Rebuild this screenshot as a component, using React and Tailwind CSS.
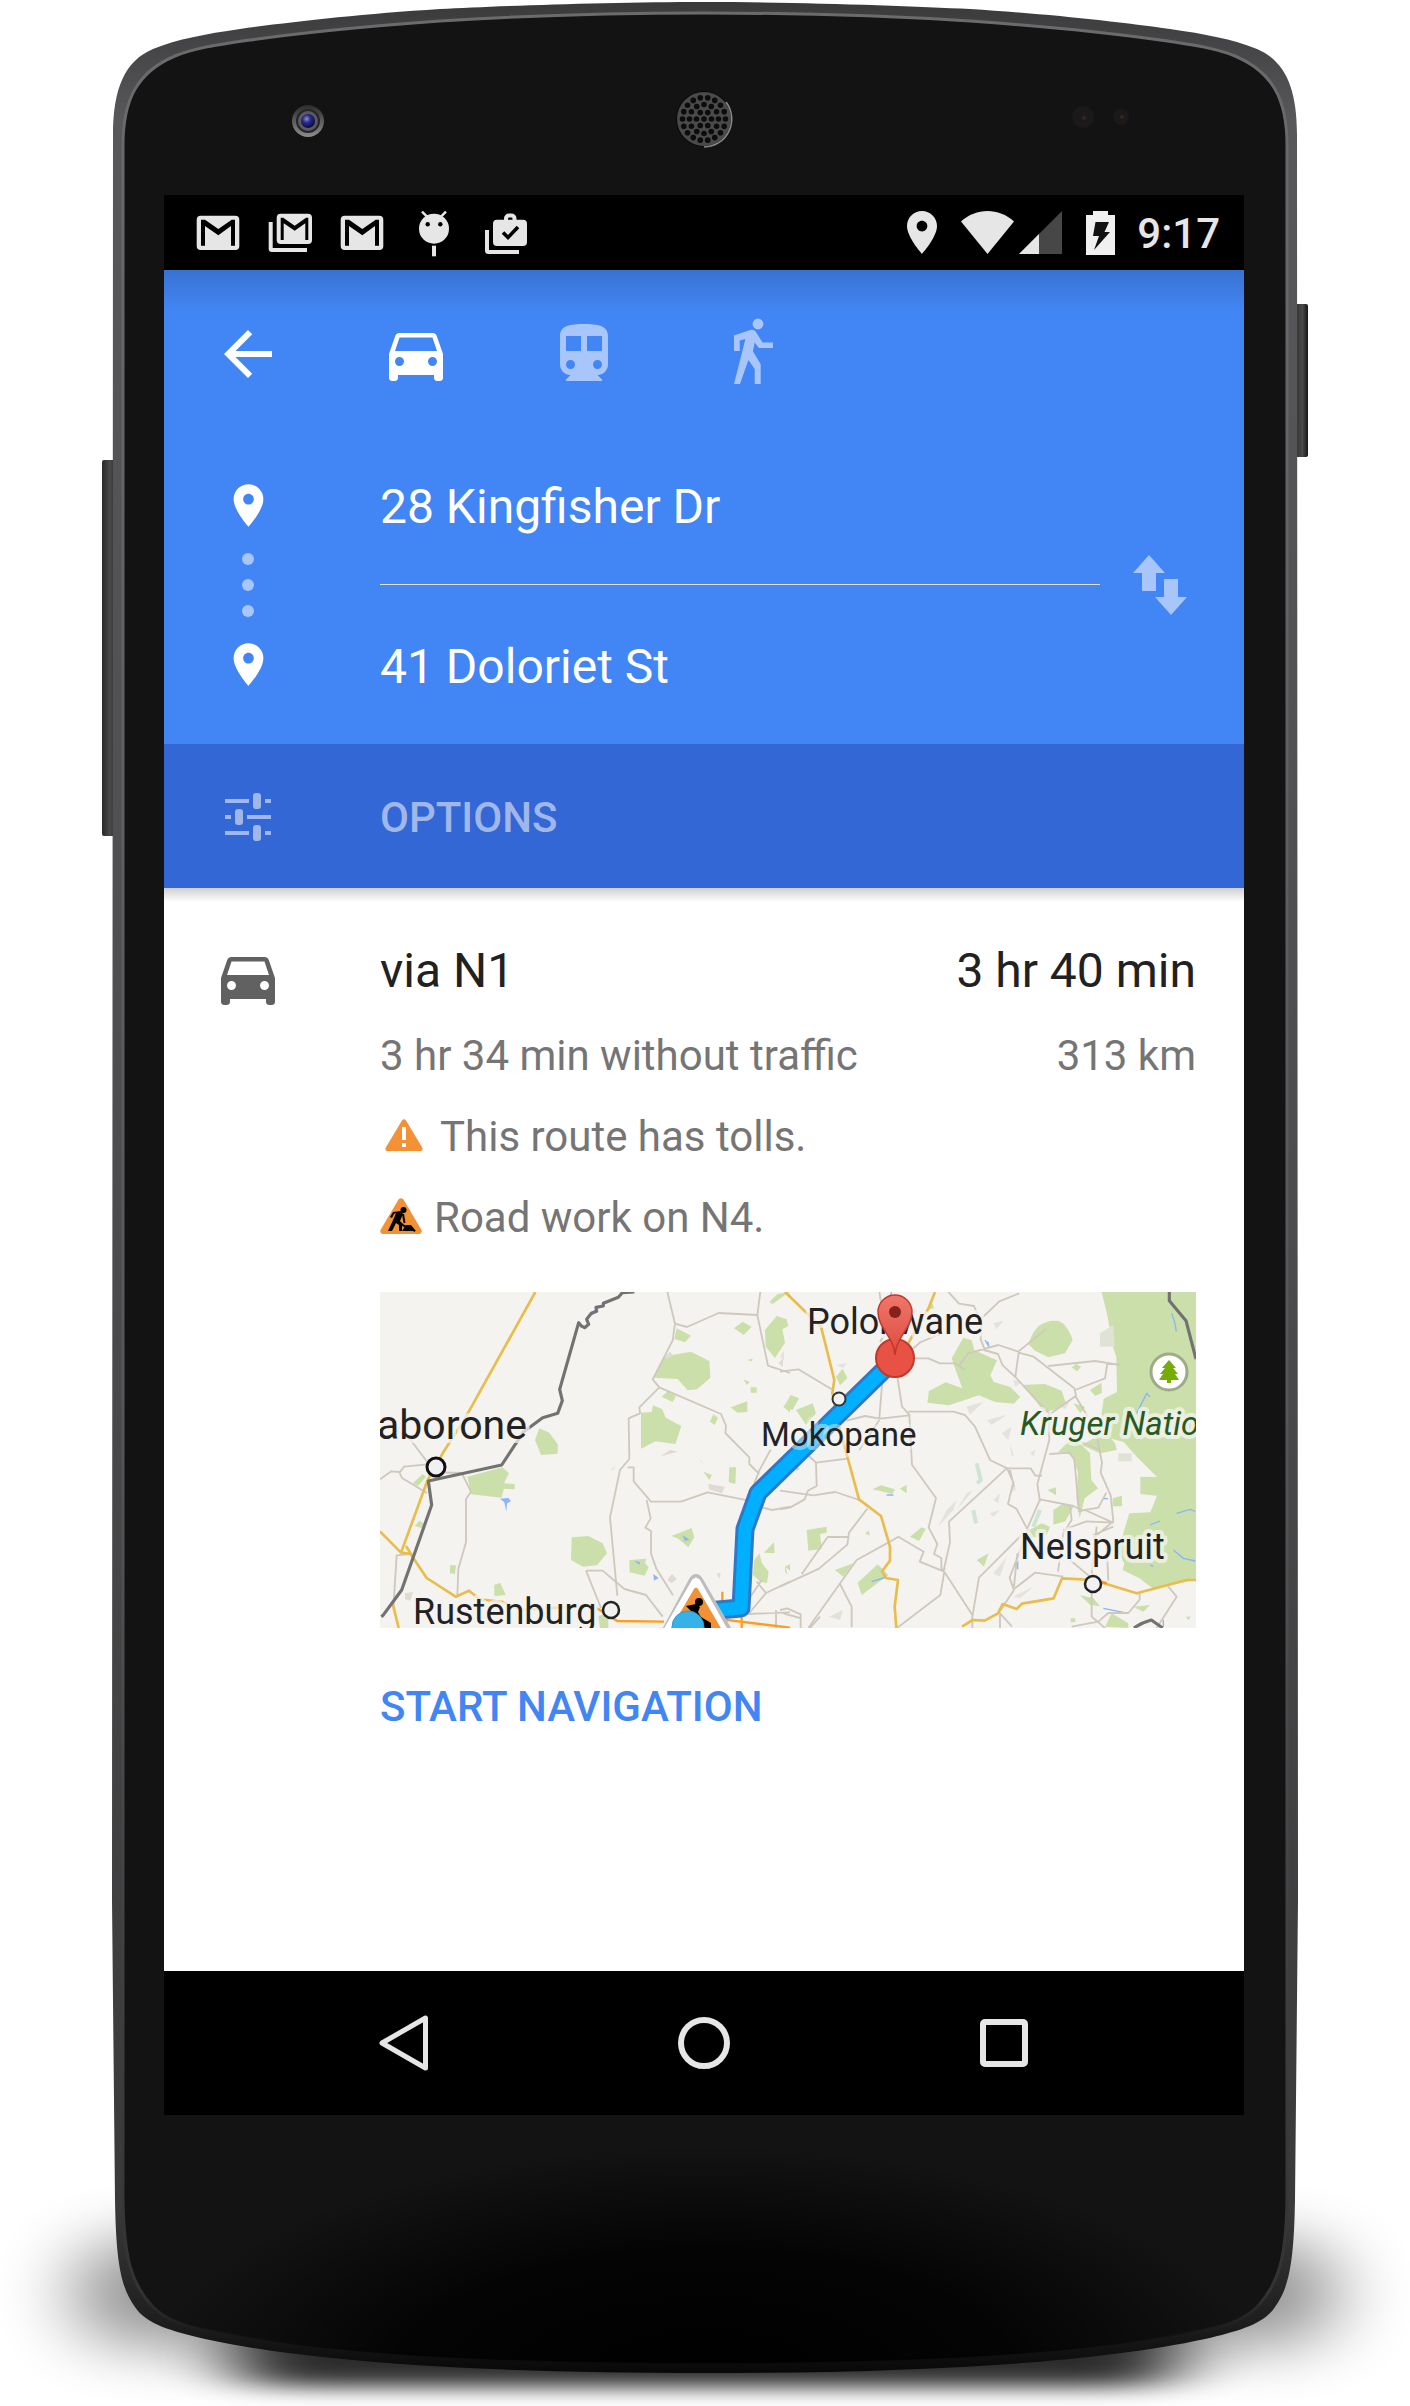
import React from "react";

const OUTER =
  "M705 2C610 2 500 6 440 9C360 14 290 22 240 29C205 34 178 39 153 49C125 61 113 88 113 135L112 1900L115 2200C116 2262 121 2288 135 2307C146 2324 171 2331 205 2339C330 2366 520 2373 705 2373C890 2373 1080 2366 1205 2339C1239 2331 1264 2324 1275 2307C1289 2288 1294 2262 1295 2200L1298 1900L1297 135C1297 88 1285 61 1257 49C1232 39 1205 34 1170 29C1120 22 1050 14 970 9C910 6 800 2 705 2Z";
const INNER =
  "M705 13C620 13 520 16 440 21C370 26 300 33 250 40C215 45 195 48 175 56C137 72 123 100 123 145L123 2200C124 2255 130 2283 153 2307C166 2320 185 2327 215 2332C340 2357 530 2363 705 2363C880 2363 1070 2357 1195 2332C1225 2327 1244 2320 1257 2307C1280 2283 1286 2255 1287 2200L1287 145C1287 100 1273 72 1235 56C1215 48 1195 45 1160 40C1110 33 1040 26 970 21C890 16 790 13 705 13Z";

const holes = [[0, 0]];
[
  [7.5, 6],
  [14.5, 12],
  [21.5, 18],
].forEach(([r, n]) => {
  for (let i = 0; i < n; i++) {
    const a = (i / n) * Math.PI * 2;
    holes.push([Math.cos(a) * r, Math.sin(a) * r]);
  }
});

function PhoneBody() {
  return (
    <svg
      className="absolute inset-0 h-full w-full"
      viewBox="0 0 1410 2406"
      preserveAspectRatio="none"
      aria-hidden="true"
    >
      <defs>
        <linearGradient id="rim" x1="0" y1="0" x2="0" y2="1">
          <stop offset="0" stopColor="#3a3a3b" />
          <stop offset="0.05" stopColor="#58585b" />
          <stop offset="0.5" stopColor="#4c4c4e" />
          <stop offset="0.93" stopColor="#3a3a3b" />
          <stop offset="0.98" stopColor="#1d1d1d" />
          <stop offset="1" stopColor="#080808" />
        </linearGradient>
        <linearGradient id="edge" x1="0" y1="0" x2="0" y2="1">
          <stop offset="0" stopColor="#6b6b6e" />
          <stop offset="0.6" stopColor="#56565a" />
          <stop offset="0.97" stopColor="#333" />
          <stop offset="1" stopColor="#0a0a0a" />
        </linearGradient>
        <radialGradient id="chin" gradientUnits="userSpaceOnUse" cx="705" cy="2380" r="560" gradientTransform="translate(0 1380) scale(1 .42)">
          <stop offset="0" stopColor="#000" />
          <stop offset="0.55" stopColor="#000" stopOpacity="0.8" />
          <stop offset="1" stopColor="#000" stopOpacity="0" />
        </radialGradient>
        <linearGradient id="side" x1="0" y1="0" x2="1" y2="0">
          <stop offset="0" stopColor="#2a2a2a" />
          <stop offset="0.6" stopColor="#4b4b4b" />
          <stop offset="1" stopColor="#161616" />
        </linearGradient>
        <radialGradient id="lens" cx="0.4" cy="0.35" r="0.7">
          <stop offset="0" stopColor="#8d93c4" />
          <stop offset="0.4" stopColor="#2a2a8c" />
          <stop offset="1" stopColor="#080830" />
        </radialGradient>
        <linearGradient id="ring" x1="0" y1="0" x2="0" y2="1">
          <stop offset="0" stopColor="#2b2b2b" />
          <stop offset="1" stopColor="#8d8d8d" />
        </linearGradient>
        <filter id="softWide" x="-20%" y="-80%" width="140%" height="260%">
          <feGaussianBlur stdDeviation="40 28" />
        </filter>
        <filter id="soft" x="-20%" y="-80%" width="140%" height="260%">
          <feGaussianBlur stdDeviation="40 10" />
        </filter>
      </defs>
      <rect x="75" y="2240" width="1260" height="106" rx="50" fill="#000" opacity="0.42" filter="url(#softWide)" />
      <rect x="235" y="2325" width="940" height="62" rx="30" fill="#000" opacity="0.8" filter="url(#soft)" />
      <rect x="102" y="460" width="14" height="376" rx="2" fill="url(#side)" />
      <rect x="1294" y="304" width="14" height="153" rx="2" fill="url(#side)" />
      <path d={OUTER} fill="url(#rim)" />
      <path d={INNER} fill="#131313" stroke="url(#edge)" strokeWidth="3" />
      <path d={INNER} fill="url(#chin)" />
      <circle cx="308" cy="121" r="16" fill="url(#ring)" />
      <circle cx="308" cy="121" r="12" fill="#262626" />
      <circle cx="308" cy="121" r="10" fill="#5c5a60" />
      <circle cx="308" cy="121" r="7" fill="url(#lens)" />
      <circle cx="704" cy="119" r="28" fill="#0a0a0a" />
      <circle cx="704" cy="119" r="27" fill="#4a4a4a" />
      <path d="M726 102a28 28 0 0 1-22 45" fill="none" stroke="#8a8a8a" strokeWidth="1.5" />
      {holes.map(([x, y], i) => (
        <circle key={i} cx={704 + x} cy={119 + y} r="2.8" fill="#0c0c0c" />
      ))}
      <circle cx="1083" cy="117" r="11" fill="#1b1a1a" />
      <circle cx="1084" cy="118" r="2" fill="#38241a" />
      <circle cx="1121" cy="117" r="8" fill="#1b1a1a" />
      <circle cx="1122" cy="117" r="2" fill="#38241a" />
    </svg>
  );
}

function Icon({ d, className }) {
  return (
    <svg viewBox="0 0 24 24" className={className} fill="currentColor" fillRule="evenodd" aria-hidden="true">
      <path d={d} />
    </svg>
  );
}

const BACK = "M20 11H7.83l5.59-5.59L12 4l-8 8 8 8 1.41-1.41L7.83 13H20v-2z";
const CAR =
  "M18.92 6.01C18.72 5.42 18.16 5 17.5 5h-11c-.66 0-1.21.42-1.42 1.01L3 12v8c0 .55.45 1 1 1h1c.55 0 1-.45 1-1v-1h12v1c0 .55.45 1 1 1h1c.55 0 1-.45 1-1v-8l-2.08-5.99zM6.5 16c-.83 0-1.5-.67-1.5-1.5S5.67 13 6.5 13s1.5.67 1.5 1.5S7.33 16 6.5 16zm11 0c-.83 0-1.5-.67-1.5-1.5s.67-1.5 1.5-1.5 1.5.67 1.5 1.5-.67 1.5-1.5 1.5zM5 11l1.5-4.5h11L19 11H5z";
const TRAIN =
  "M12 2c-4.42 0-8 .5-8 4v9.5C4 17.43 5.57 19 7.5 19L6 20.5v.5h12v-.5L16.5 19c1.93 0 3.5-1.57 3.5-3.5V6c0-3.5-3.58-4-8-4zM7.5 17c-.83 0-1.5-.67-1.5-1.5S6.67 14 7.5 14s1.5.67 1.5 1.5S8.33 17 7.5 17zm3.5-6H6V6h5v5zm5.5 6c-.83 0-1.5-.67-1.5-1.5s.67-1.5 1.5-1.5 1.5.67 1.5 1.5-.67 1.5-1.5 1.5zm1.5-6h-5V6h5v5z";
const WALK =
  "M14 .2a1.8 1.8 0 1 0 0 3.6a1.8 1.8 0 1 0 0-3.6zM6 5.8L11.4 4C12.3 3.7 13 4 13.3 4.7L15.5 8.2H19V10H14.3L12.9 8.2L12.3 11.1L14.9 15.4V22H12.9V17L10.8 14L8 22H6L9.8 7L7.9 7.5V11H6z";
const PLACE =
  "M12 2C8.13 2 5 5.13 5 9c0 5.25 7 13 7 13s7-7.75 7-13c0-3.87-3.13-7-7-7zm0 9.5c-1.38 0-2.5-1.12-2.5-2.5s1.12-2.5 2.5-2.5 2.5 1.12 2.5 2.5-1.12 2.5-2.5 2.5z";

function Gmail() {
  return (
    <svg viewBox="0 0 72 75" className="h-[75px] w-[72px]" aria-label="Gmail">
      <rect x="14.7" y="20.7" width="42.6" height="34.3" rx="4" fill="#e6e6e6" />
      <path d="M19 24.7h4l13.3 9.3 13.4-9.3H53v26h-4V31l-12.7 9.3L23 31v19.7h-4z" fill="#000" />
    </svg>
  );
}

function StatusBar() {
  return (
    <div className="flex h-[75px] items-center justify-between bg-black pr-6 pl-[18px]">
      <div className="flex">
        <Gmail />
        <svg viewBox="0 0 72 75" className="h-[75px] w-[72px]" aria-label="Gmail stack">
          <rect x="22.7" y="18.7" width="35.3" height="30.3" rx="4" fill="#e6e6e6" />
          <path d="M26.7 22.7h2.5l11.5 8 11.3-8h2.3V45h-3V28.3l-10.6 7.4-11-7.4V45h-3z" fill="#000" />
          <path d="M14.7 27h4v26H53v4H18a3.3 3.3 0 0 1-3.3-3.3z" fill="#e6e6e6" />
        </svg>
        <Gmail />
        <svg viewBox="0 0 72 75" className="h-[75px] w-[72px]" aria-label="Android">
          <circle cx="36" cy="33.7" r="15" fill="#e6e6e6" />
          <path d="M24 16.7l5.5 5.5M48 16.7l-5.5 5.5" stroke="#e6e6e6" strokeWidth="2.4" />
          <circle cx="29.7" cy="29.3" r="2.2" />
          <circle cx="42.3" cy="29.3" r="2.2" />
          <path d="M34 50.7h4v10.6h-4z" fill="#e6e6e6" />
        </svg>
        <svg viewBox="0 0 72 75" className="h-[75px] w-[72px]" aria-label="Play Store">
          <rect x="23" y="24.7" width="34" height="26.3" rx="4" fill="#e6e6e6" />
          <path d="M36 26v-2.5a3 3 0 0 1 3-3h2.5a3 3 0 0 1 3 3V26" fill="none" stroke="#e6e6e6" strokeWidth="4" />
          <path d="M15 35h4v20h30v4H18.500a3.500 3.500 0 0 1-3.500-3.500z" fill="#e6e6e6" />
          <path d="M33 37.500l5 5L48 32" fill="none" stroke="#000" strokeWidth="3.600" />
        </svg>
      </div>
      <div className="flex items-center text-[#e6e6e6]">
        <svg viewBox="5 2 14 20" className="mr-6 h-[43px] w-[30px]" fill="currentColor" fillRule="evenodd" aria-label="Location">
          <path d={PLACE} />
        </svg>
        <svg viewBox="0 0 53 43" className="mr-[5px] h-[43px] w-[53px]" fill="currentColor" aria-label="Wi-Fi">
          <path d="M0 10.500C15-3.500 38-3.500 53 10.500L26.500 43z" />
        </svg>
        <svg viewBox="0 0 43 43" className="mr-6 h-[43px] w-[43px]" fill="currentColor" aria-label="Signal">
          <path d="M43 0v43H0z" fill="#474747" />
          <path d="M20 23v20H0z" />
        </svg>
        <svg viewBox="0 0 29 44" className="mr-[22px] h-[44px] w-[29px]" aria-label="Battery charging">
          <path d="M7 0h15v4h7v40H0V4h7z" fill="#f0f0f0" />
          <path d="M9.500 11H23l-4.500 10H24L8 39l5-14H7z" fill="#111" />
        </svg>
        <span className="pt-0.5 text-[42px] leading-none font-medium">9:17</span>
      </div>
    </div>
  );
}

function Header() {
  return (
    <header className="bg-[#4285f4] bg-linear-to-b from-[#3a72d1] to-[#4285f4] to-[40px] text-white">
      <nav className="flex items-center gap-24 px-12 pt-12" aria-label="Travel mode">
        <button type="button" aria-label="Back">
          <Icon d={BACK} className="size-[72px]" />
        </button>
        <button type="button" aria-label="Driving">
          <Icon d={CAR} className="size-[72px]" />
        </button>
        <button type="button" aria-label="Transit" className="text-[#a8c6fa]">
          <Icon d={TRAIN} className="size-[72px]" />
        </button>
        <button type="button" aria-label="Walking" className="text-[#a8c6fa]">
          <Icon d={WALK} className="size-[72px]" />
        </button>
      </nav>
      <div className="mt-9 flex items-center">
        <div className="flex w-[168px] flex-none flex-col items-center">
          <Icon d={PLACE} className="size-[51px]" />
          <div className="flex h-[108px] flex-col items-center justify-center gap-[14px]">
            <span className="size-3 rounded-full bg-[#a8c6fa]" />
            <span className="size-3 rounded-full bg-[#a8c6fa]" />
            <span className="size-3 rounded-full bg-[#a8c6fa]" />
          </div>
          <Icon d={PLACE} className="size-[51px]" />
        </div>
        <div className="ml-12 min-w-0 flex-1">
          <input
            aria-label="Starting point"
            defaultValue="28 Kingfisher Dr"
            className="block h-[158px] w-full bg-transparent pt-0.5 text-[48px] outline-none"
          />
          <hr className="border-t border-[#e0e0e0]" />
          <input
            aria-label="Destination"
            defaultValue="41 Doloriet St"
            className="block h-[159px] w-full bg-transparent pt-1 text-[48px] outline-none"
          />
        </div>
        <button type="button" aria-label="Swap start and destination" className="mr-12 ml-6">
          <svg viewBox="0 0 72 72" className="size-[72px]" fill="#a8c6fa" aria-hidden="true">
            <path d="M25 6l16 18h-9v18H18V24H9zM40 30h14v18h9L47 66 31 48h9z" />
          </svg>
        </button>
      </div>
    </header>
  );
}

function RoadWork({ className }) {
  return (
    <svg viewBox="0 0 42 36" className={className} aria-label="Road work">
      <path d="M18.500 1.500Q21 -1 23.500 1.500L41.500 32Q42.500 35.500 39 36H3Q-.5 35.500 .5 32z" fill="#f29135" />
      <circle cx="23.500" cy="12" r="3" />
      <path d="M13 14l8-1 2 3-3 7 3 3 12 7v1l-13-6v5h-3v-6l-3-2-4 8h-4l6-13 2-5-2 1-2 4-2-1z" />
      <path d="M23 16l1.500 9" stroke="#000" strokeWidth="2" />
      <path d="M22 33l4-6h5l5 6z" />
    </svg>
  );
}

const ROAD = { fill: "none", stroke: "#cfc8bd", strokeWidth: 5.5, strokeLinejoin: "round" };
const HIGHWAY = { fill: "none", stroke: "#e8bd4c", strokeWidth: 8, strokeLinejoin: "round" };
const BORDER = { fill: "none", stroke: "#727272", strokeWidth: 9.5, strokeLinejoin: "round" };

function Label({ children, ...rest }) {
  return (
    <text fill="#222" stroke="#f4f3f0" strokeOpacity="0.75" strokeWidth="8" strokeLinejoin="round" paintOrder="stroke" {...rest}>
      {children}
    </text>
  );
}

function RouteMap() {
  return (
    <svg
      viewBox="0 0 816 336"
      preserveAspectRatio="xMidYMid slice"
      className="block h-[336px] w-full bg-[#f4f3f0]"
      role="img"
      aria-label="Route map"
    >
      <defs>
        <linearGradient id="pin" x1="0" y1="0" x2="0" y2="1">
          <stop offset="0" stopColor="#f0766b" />
          <stop offset="1" stopColor="#dd4b3e" />
        </linearGradient>
      </defs>
      {/* West half */}
      <g transform="scale(.33333) translate(-60 -36)">
        <g fill="#cbdfaa">
          <path d="M322 590l105-28 20 18-15 30 32 2v16l-32-2-8 27-90-10z" />
          <path d="M538 445l30 13 25 35v28l-50 4-18-45z" />
          <path d="M158 610l30-28 10 8-24 28zM165 738l12-16 14 8-6 14zM270 856h18l-3 26-15-2zM403 914l18-5 16 36-34 3z" />
          <path d="M935 225l58-10 55 28 3 50-40 35-28 3-30-34-72-4 30-60 20-2z" />
          <path d="M950 145l43 22-18 20-32-10zM1122 145l26-20 27 15-24 25zM1215 150l35-42 30 10 5 20-18 10 8 40-30 46-28-34zM1228 66l25-24 35-6-50 36zM1270 380l20-22v40z" />
          <path d="M843 398l32-2 4-20 28 12 10 25 47 25-18 54-60-8-43 22zM905 350l18-16 25 14-10 18zM1112 382l50-18v32l-30 2zM1050 425l10-22 14 10-10 22zM1030 575l26 10-8 15zM1108 562h20l-2 50-20-5zM1150 298l20 8-10 8zM1172 322h18v16h-18zM1160 240l18-4-2 8z" />
          <path d="M635 772l50-4 43 22 13 30-30 36-42 4-36-20zM935 768l60-24 8 28-18 30-30-26zM808 840l50-4-2 15 10 10-12 26-45-10zM1212 818l30-32 2 34zM1183 840l15-20 8 30 20 25-5 35-20-5-22-20zM1275 860l15-8v20zM715 1008l30-8v44h-25z" />
        </g>
        <g fill="#dfdad2">
          <path d="M1045 612l50 8-10 20-38-12zM922 900l14-18 14 15-15 13zM135 940l24-4-8 26-16-4zM910 235l20-20 10 12zM1255 250l14-15v25zM900 530l30-20 24 5-30 8zM1018 536l14 16-8-6zM752 570l16-14-8 12zM1070 880h12l-4 16z" />
        </g>
        <path d="M420 656l25-2 8 10-12 6-2 25-6-28zM822 842l18 4-2 8zM968 766l22 14-16 2zM880 882l16 12-14 8zM690 102l24-22-15 26z" fill="#8ab4f8" />
        <g {...ROAD}>
          <path d="M60 598l34-24 26 2 12-16 70-7M202 546l-50-66-45-30M118 576l8 18 75 45M205 576l100 3 28 56-15 22v130l-23 80-3 80M150 822l-40 4-10 160" />
          <path d="M922 36l23 95-7 50-60 117 20 24-60 60 2 18-34 15 2 122-28 33-30 142 22 235" />
          <path d="M945 131l36 10 95-42 116 6 9-70M1192 105l32 152 66 22M898 322l185 80 15 35-2 22 72 73v20l30 30M803 562h18v42l52 61h90l80-28 120 24 35-90 34-62M860 660l12 55-16 28 17 10v68l16 45 50 80M678 872h50l65 55 65 18 50 65M678 872l45 112M1190 905l28 34 72-34M1218 939l-50 60M1165 1002l125-5M1248 990v54M1195 680l42 10 53-10M1205 900l-40 60" />
        </g>
        <g {...HIGHWAY}>
          <path d="M526 36L318 410l-70 110-45 80-80 218M138 798l20 32M60 754l62 63 30 5 48 72 87 56 40-18 32 26 70 8 55 24 210-14" />
          <path d="M98 970l18 74" />
        </g>
        <path d="M710 984l62 39 140 2M1060 1015l230 28M1087 935v30M1145 1005v39" fill="none" stroke="#ff9d1e" strokeWidth="7" />
        <path d="M1277 36l13 14" {...HIGHWAY} />
        <path d="M823 36l-36 2-12 14-45 18v8l-22 4 2 12-16 6-14 18 6 15-12 10-10-5-8-10-57 200 8 34-14 38-45 13-57 42-66 100-220 48 10 72-90 255-56 76-5 4" {...BORDER} />
      </g>
      {/* East half */}
      <g transform="translate(400 -12) scale(.33333)">
        <g fill="#cbdfaa">
          <path d="M965 36h283v864l-130 25-40-30-50-25 5-20-20-35 35-115 63-3 20-50-50-5v-52l50 1-60-60-40-45-75-20 15-110 40-20-2-105-10-30-17-95z" />
          <path d="M750 180q20-60 80-58q30 4 48 58l-23 40-50 12-40-20-20-20zM515 235l35-62 25 8 8 30 68 30-20 45 10 20 50 15 30 30-20 20-55-5-50-20-30 10-60 20-64-8 5-35 50-26 50 18-20-55z" />
          <path d="M725 315l70-3 50 20 12 36-30 20-35 10-20-30zM875 262l14-10 14 8-12 14zM930 330l34-22 2 30-20 10zM835 515l45-45 50 50 4 80 20 25-40 30-15 60-10-60 5-80-20-50zM820 690l32-20 28 12-24 42-36 10zM745 752l40-22 25 10-10 25-50 10zM905 495l70-40 30 35 5 20-50 10zM802 630l26-8v24zM998 655l28-8v32h-28zM880 370l35 10-14 20z" />
          <path d="M168 290l20-24 14 28-22 22zM12 380l20-35 25 10-20 36zM48 390l50-20 10 30-30 34zM278 628l25-12 42 12-8 14zM360 626l20-12v26zM390 770l35-28 12 5-20 36zM80 750l60-10v18l-20 4 5 45-40 5zM165 870l55-20-30 40zM233 908l60-55 32 32-80 60zM590 840l36-20-14 40zM975 1040l20-40 50 30v14zM900 946l40 8 20 25-30-5zM255 760l12-8 2 15zM45 560l15 5-10 8zM1060 980l50-5-20 20zM872 1015h14v12h-14zM1218 1010h15l-8 10zM440 90l15-25 8 20zM15 855l8 30-8-10z" />
        </g>
        <g fill="#dfe3d5">
          <path d="M960 160l40-25 4 65h-44zM1015 520h40v24h-40zM148 1010l40-20-8 30z" />
        </g>
        <g fill="#e3e2de">
          <path d="M475 740l45-50 10-30-30 30zM530 690l50-60-20 10zM560 380l50-15-40 40zM620 420l60-15-45 30zM665 460l30-20-10 40zM700 300l26 6-20 14zM640 130l30-8-20 26zM690 640l12-40 5 30zM640 660l20-20-5 30zM690 490l12 40-8-5zM630 700l30-10-20 20zM770 800l60-20-50 60zM640 880l40-50-20 60zM700 950l60-30-40 35zM750 520l16-12-4 20zM840 380l30-18-14 26zM170 255l30-5-12 14zM0 230l12-20v30z" />
        </g>
        <g fill="none" stroke="#cfe4d3" strokeWidth="12">
          <path d="M590 550l12 50-10 10M580 690l8 40M780 690l-20 50" />
        </g>
        <g fill="none" stroke="#8ab4f8" strokeWidth="4">
          <path d="M1070 400l30-60 10 10M1175 100l10 30 4 25M615 180l12 20-4-15M1110 735l30-12M1190 700l40-12 16 6M1180 810l30 25 36 8M1110 855l10 4M1200 320l12-14M275 905l45-14M705 860l8-12v20M970 985l60 12M1150 1020v20M335 36l-4 10M805 450l5-22M970 656h14M320 645h20" />
        </g>
        <g {...ROAD}>
          <path d="M0 275l55-7 100 60M298 36l20 120-18 30M400 235h45l35 15h45l30 20M382 220l40-34 60-24M505 36l32 35 45 7 22 54-2 46 13 33M718 40l-60 24-52 50M535 260l30-40 90-25 60 20 85-70M612 210l42 12 14 34 38 35 100 108 2 80-36 134 8 52M716 218l-10 72M716 218l45 12 122 95 5 22-85 60M805 258l140-15 75 12M982 250l-7 45-90 35M886 348l60 100 20 100-4 30 30 68 8 78-60 50M385 395h135l35 10 30 35 45 100 52 25h70l14 22h20M352 290l14 90 22 24 8 150 72 100-22 88 26 50-10 30 22 12v35l12-2M308 290l-10 125M200 422l55-14 45 8 88-10M298 420l-60 90M80 522l28 26 95-12M108 548l2 70-26 14-10 26-44 25-30 5M0 632l100 14 66-10 72 24M262 686l-55 72-5 36-85 72-117 54M205 771h-62l-78 112M330 785l-100 55-145 204M330 785l25-15 76 45-12 30 74 30M490 875l20-88-3-62 173-160M493 875l-12 70-130 99M493 875l84 130v40M577 1010l20-117 130-130M682 567l18 40-16 65 25 14 35 65-20 50-35 92 12 35 64-50 85 12M656 1000l46-70M180 912l35 68v62M0 990l22-5 40 18v41M10 1000l50 14M120 1010l-30 34M780 658l100 20 24 12M690 570l12 50M780 658l-40 92M808 522l60-4 15 20 14 155 58-10 24-45M915 690l84 38-80-4-70 26M1000 740l-60 25M870 840l66 55M850 760l-16 115M935 880l15-140M980 800l5 102M935 920v90l40 34M875 1040l80-15 30-26h60l34-40v-20M1165 920l25 30-60 94M660 1000v44M660 1000l36 40M870 680l5 40-25 40M890 480l70 30M712 820l-10 100" />
        </g>
        <g {...HIGHWAY}>
          <path d="M15 36l108 104 40 160-6 38 20 100 60 220 66 50 27 92v42l-24 32 12 20 36 6-10 80 5 64M465 36l-20 50-20 30-40 74M546 1040l32-20 36 2 40-22 14-28 42 15 16-16 95-16 25-60 98 5M940 900l130 40 150-40h28" />
        </g>
        <path d="M940 900l40 10" fill="none" stroke="#ff8c1a" strokeWidth="8" />
        <path d="M1168 36v26l50 60 30 115M1062 1044q20-15 52-24l34 24" {...BORDER} />
      </g>
      {/* Route */}
      <g fill="none" strokeLinejoin="round">
        <path d="M514 68L378 201l-13 36-4 79-57 5" stroke="#3078c6" strokeWidth="19" />
        <path d="M514 68L378 201l-13 36-4 79-57 5" stroke="#00b0ff" strokeWidth="13" />
      </g>
      <g fill="#f1f1f1">
        <circle cx="56" cy="175" r="9" stroke="#111" strokeWidth="3" />
        <circle cx="231" cy="318" r="8" stroke="#222" strokeWidth="2.500" />
        <circle cx="459" cy="107" r="6.500" stroke="#333" strokeWidth="2" />
        <circle cx="713" cy="292" r="8" stroke="#222" strokeWidth="2.500" />
      </g>
      <Label x="147" y="147" textAnchor="end" fontSize="41">Gaborone</Label>
      <Label x="33" y="332" fontSize="36">Rustenburg</Label>
      <Label x="427" y="42" fontSize="36">Polokwane</Label>
      <Label x="381" y="154" fontSize="33" strokeOpacity="0.45">Mokopane</Label>
      <Label x="640" y="267" fontSize="36">Nelspruit</Label>
      <Label x="640" y="143" fontSize="33" fontStyle="italic" fill="#265a22">Kruger National Park</Label>
      {/* Park badge */}
      <circle cx="789" cy="80" r="18" fill="#fff" stroke="#9dab86" strokeWidth="3" />
      <path d="M789 68l7 8h-3l5 6h-3l4 6h-8v3h-4v-3h-8l4-6h-3l5-6h-3z" fill="#75ad05" />
      {/* Road work and current position */}
      <path d="M284 340l28-52q4-6 8 0l30 52z" fill="#fff" stroke="#bdbdbd" strokeWidth="6" strokeLinejoin="round" />
      <path d="M282 340l30-52q4-5 8 0l29 52z" fill="#fff" />
      <path d="M290 338l24-41q2-3 4 0l24 41z" fill="#f29135" />
      <circle cx="319" cy="310" r="4" />
      <path d="M306 314l10-2 4 3-2 5 3 5 10 6v5h-15l-4-16z" />
      <circle cx="308" cy="335" r="16" fill="#37b2e8" stroke="#2a9ad0" strokeWidth="1" />
      {/* Destination */}
      <circle cx="515" cy="66" r="19" fill="#e75245" stroke="#c4382c" strokeWidth="2" />
      <path d="M515 63c-1-18-17-27-17-43a17 17 0 0 1 34 0c0 16-16 25-17 43z" fill="url(#pin)" stroke="#c4382c" strokeWidth="1.500" />
      <circle cx="515" cy="20" r="6" fill="#86221a" />
    </svg>
  );
}

function Results() {
  return (
    <main className="flex flex-1 bg-white bg-linear-to-b from-[#cfcfcf] to-white to-[14px] px-12 pt-[54px]">
      <Icon d={CAR} className="size-[72px] flex-none text-[#616161]" />
      <div className="ml-24 min-w-0 flex-1">
        <div className="flex justify-between text-[48px] leading-[58px] text-[#212121]">
          <h1>via N1</h1>
          <p>3 hr 40 min</p>
        </div>
        <div className="mt-[15px] text-[42px] leading-[81px] text-[#757575]">
          <div className="flex justify-between">
            <p>3 hr 34 min without traffic</p>
            <p>313 km</p>
          </div>
          <p className="flex items-center">
            <svg viewBox="0 0 38 32" className="mr-[17px] mb-1 ml-[5px] h-8 w-[38px]" aria-label="Warning">
              <path d="M17 1.500Q19 -1 21 1.500L37.500 29Q38 32 36 32H2Q0 32 .5 29z" fill="#f29135" />
              <path d="M17 8h4v13h-4zM17 24h4v4h-4z" fill="#fff" />
            </svg>
            This route has tolls.
          </p>
          <p className="flex items-center">
            <RoadWork className="mr-3 mb-1 h-9 w-[42px]" />
            Road work on N4.
          </p>
        </div>
        <div className="mt-[34px]">
          <RouteMap />
        </div>
        <button type="button" className="mt-[42px] block h-[72px] text-[42px] font-medium text-[#4285f4]">
          START NAVIGATION
        </button>
      </div>
    </main>
  );
}

function SystemNav() {
  return (
    <nav className="flex h-36 items-center justify-center gap-[228px] bg-black" aria-label="System">
      <button type="button" aria-label="Back">
        <svg viewBox="0 0 72 72" className="size-[72px]" fill="none" stroke="#e6e6e6" strokeWidth="5" strokeLinejoin="round">
          <path d="M57.500 11v50L14 36z" />
        </svg>
      </button>
      <button type="button" aria-label="Home">
        <svg viewBox="0 0 72 72" className="size-[72px]" fill="none" stroke="#e6e6e6" strokeWidth="6">
          <circle cx="36" cy="36" r="23" />
        </svg>
      </button>
      <button type="button" aria-label="Recent apps">
        <svg viewBox="0 0 72 72" className="size-[72px]" fill="none" stroke="#e6e6e6" strokeWidth="6">
          <rect x="15" y="15" width="42" height="42" rx="2" />
        </svg>
      </button>
    </nav>
  );
}

export default function App() {
  return (
    <div className="relative flex min-h-screen flex-col overflow-hidden bg-white pt-[195px] pr-[166px] pb-[291px] pl-[164px] font-['Roboto',sans-serif]">
      <PhoneBody />
      <div className="relative flex flex-1 flex-col">
        <StatusBar />
        <Header />
        <button
          type="button"
          className="flex h-36 items-center bg-[#3367d6] px-12 text-left text-[42px] font-medium text-[#a1b7ea]"
        >
          <svg viewBox="0 0 72 72" className="mr-24 size-[72px]" fill="currentColor" aria-hidden="true">
            <path d="M13 19h24v4H13zM53 19h6v4h-6zM13 35h6v4h-6zM35 35h24v4H35zM13 51h24v4H13zM53 51h6v4h-6z" />
            <rect x="41" y="13" width="8" height="16" rx="3" />
            <rect x="23" y="29" width="8" height="16" rx="3" />
            <rect x="41" y="45" width="8" height="16" rx="3" />
          </svg>
          <span className="pt-0.5">OPTIONS</span>
        </button>
        <Results />
        <SystemNav />
      </div>
    </div>
  );
}
